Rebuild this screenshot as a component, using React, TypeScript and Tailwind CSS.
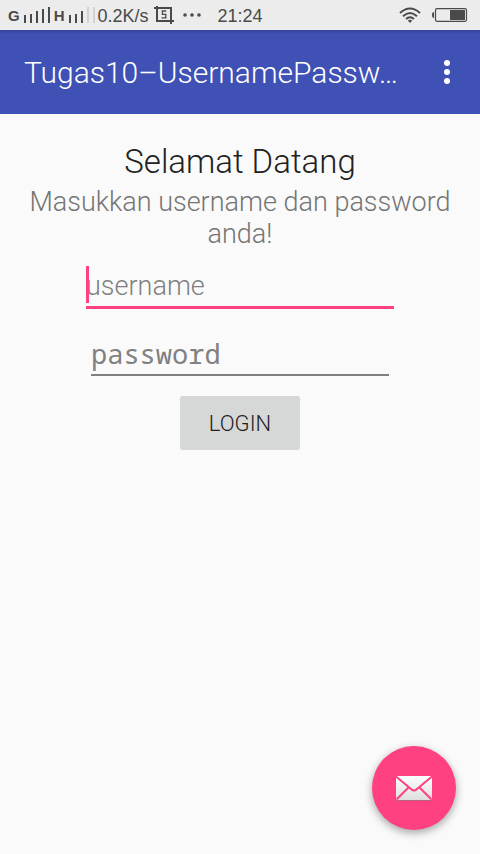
import React from "react";

function Bars({ heights, color }: { heights: number[]; color: string }) {
  return (
    <svg
      width={heights.length * 6 - 4}
      height="16"
      fill={color}
      aria-hidden="true"
      shapeRendering="crispEdges"
    >
      {heights.map((h, i) => (
        <rect key={i} x={i * 6} y={16 - h} width="2" height={h} />
      ))}
    </svg>
  );
}

function StatusBar() {
  return (
    <div className="flex h-[30px] items-center justify-between bg-[#ececec] pr-3 pl-2 font-['Liberation_Sans',Arial,sans-serif] text-[#4a4a4a]">
      <div className="flex items-center">
        <div className="flex items-end gap-1 text-[15px] leading-[14px] font-bold">
          <span>G</span>
          <Bars heights={[8, 9, 12, 14, 16]} color="#4a4a4a" />
          <span>H</span>
          <Bars heights={[8, 9, 12]} color="#4a4a4a" />
          <Bars heights={[16, 16]} color="#d2d2d2" />
        </div>
        <span className="ml-[3px] pt-0.5 text-lg leading-5 font-normal">0.2K/s</span>
        <svg className="ml-[5px]" width="20" height="18" viewBox="0 0 20 18" fill="none" stroke="#4a4a4a" strokeWidth="2" aria-hidden="true">
          <path d="M0 2H17V18M3 0V15H20" />
          <path d="M12.2 5H8.4V8.4H11.8V11.8H7.6" strokeWidth="1.3" />
        </svg>
        <svg className="ml-2" width="20" height="4" fill="#4a4a4a" aria-hidden="true">
          <circle cx="3" cy="2" r="1.8" />
          <circle cx="10" cy="2" r="1.8" />
          <circle cx="17" cy="2" r="1.8" />
        </svg>
        <span className="ml-4 pt-0.5 text-lg leading-5 font-normal">21:24</span>
      </div>
      <div className="flex items-center gap-[11px]">
        <svg width="22" height="16" viewBox="0 0 22 16" fill="none" stroke="#4a4a4a" strokeWidth="2" aria-hidden="true">
          <path d="M1 6Q11 -3 21 6M4 9.2Q11 2.8 18 9.2M7 12Q11 8.4 15 12" />
          <path d="M8.8 13.6Q11 11.8 13.2 13.6L11 16Z" fill="#4a4a4a" stroke="none" />
        </svg>
        <svg width="36" height="14" viewBox="0 0 36 14" aria-hidden="true">
          <path d="M2 4V10Q0 10 0 7Q0 4 2 4Z" fill="#4a4a4a" />
          <rect x="3.5" y="0.7" width="31" height="12.6" rx="1.5" fill="none" stroke="#4a4a4a" strokeWidth="1.2" />
          <rect x="18" y="2" width="15" height="10" fill="#4a4a4a" />
        </svg>
      </div>
    </div>
  );
}

export default function App() {
  return (
    <div className="relative flex min-h-screen flex-col bg-[#fafafa] font-['Roboto','Liberation_Sans',sans-serif] font-light">
      <StatusBar />
      <header className="flex h-[84px] items-center justify-between bg-[#3f51b5] bg-linear-to-b from-[#34439a] to-[#3f51b5] to-[4px] px-6">
        <h1 className="pt-0.5 text-[30px] leading-10 text-white">Tugas10–UsernamePassw…</h1>
        <button type="button" aria-label="Menu" className="flex h-12 w-[18px] items-center justify-center">
          <svg width="6" height="24" fill="#fff" aria-hidden="true">
            <circle cx="3" cy="3" r="3" />
            <circle cx="3" cy="12" r="3" />
            <circle cx="3" cy="21" r="3" />
          </svg>
        </button>
      </header>

      <main className="flex flex-1 flex-col items-center px-6 pt-6">
        <h2 className="text-[33px] leading-[48px] text-[#212121]">Selamat Datang</h2>
        <p className="text-center text-[27px] leading-8 text-[#757575]">
          Masukkan username dan password anda!
        </p>
        <form className="mt-4 flex flex-col items-center" onSubmit={(e) => e.preventDefault()}>
          <div className="relative">
            <input
              type="text"
              aria-label="username"
              placeholder="username"
              className="block h-[43px] w-[308px] border-b-[3px] border-[#ff4081] text-[27px] leading-10 text-[#212121] outline-none placeholder:text-[#808080]"
            />
            <span className="absolute top-0 left-0 h-[37px] w-[3px] bg-[#ff4081]" />
          </div>
          <input
            type="password"
            aria-label="password"
            placeholder="password"
            className="mt-6 block h-[43px] w-[298px] border-b-2 border-[#808080] font-['Noto_Sans_Mono','DejaVu_Sans_Mono',monospace] text-[27px] leading-10 font-normal text-[#212121] outline-none placeholder:text-[#808080]"
          />
          <button
            type="submit"
            className="mt-5 h-[54px] w-[120px] rounded-[3px] bg-[#d6d7d7] pt-0.5 text-[22px] leading-6 text-[#212121]"
          >
            LOGIN
          </button>
        </form>
      </main>

      <button
        type="button"
        aria-label="Email"
        className="absolute right-6 bottom-6 flex size-[84px] items-center justify-center rounded-full bg-[#ff4081] shadow-[0_3px_9px_rgba(0,0,0,0.35)]"
      >
        <svg width="36" height="26" viewBox="0 0 36 26" aria-hidden="true">
          <defs>
            <linearGradient id="paper" x1="0" y1="0" x2="0" y2="1">
              <stop offset="0" stopColor="#ffffff" />
              <stop offset="1" stopColor="#dedede" />
            </linearGradient>
          </defs>
          <rect y="2" width="36" height="24" rx="1" fill="#b0647e" />
          <rect y="1" width="36" height="24" rx="1" fill="url(#paper)" />
          <path d="M0 1.5L15 14Q18 17 21 14L36 1.5M0.5 24.5L12.5 12.5M35.5 24.5L23.5 12.5" fill="none" stroke="#ff4081" strokeWidth="2" />
        </svg>
      </button>
    </div>
  );
}
